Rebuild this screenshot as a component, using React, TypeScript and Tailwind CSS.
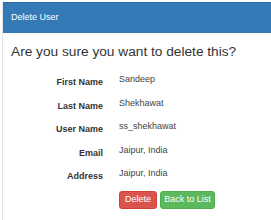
const rows = [
  ['First Name', 'Sandeep'],
  ['Last Name', 'Shekhawat'],
  ['User Name', 'ss_shekhawat'],
  ['Email', 'Jaipur, India'],
  ['Address', 'Jaipur, India'],
];

export default function App() {
  return (
    <div
      className="w-[271px] h-[220px] overflow-hidden bg-white pt-[2px] pl-[2px]"
      style={{ fontFamily: '"Liberation Sans", Arial, sans-serif' }}
    >
      <div className="h-full border-l border-[#e3e3e3]">
        <div className="h-[31px] bg-[#337ab7] border-t border-[#2e6da4] px-[8px] flex items-center text-white text-[9px]">
          Delete User
        </div>
        <div className="pl-[8px] pt-[9px]">
          <h3 className="text-[13.7px] leading-[20px] whitespace-nowrap text-[#333]">
            Are you sure you want to delete this?
          </h3>
          <div className="mt-[11px] flex flex-col">
            {rows.map(([label, value]) => (
              <div key={label} className="flex h-[23.5px]">
                <div className="w-[92px] text-right font-bold text-[9px] text-[#333] pt-[3px]">{label}</div>
                <div className="ml-[16px] text-[9px] text-[#444]">{value}</div>
              </div>
            ))}
          </div>
          <div className="ml-[108px] flex gap-[3px]">
            <button className="h-[18px] w-[38px] rounded-[3px] bg-[#d9534f] border border-[#d43f3a] text-white text-[9px]">
              Delete
            </button>
            <button className="h-[18px] w-[55px] rounded-[3px] bg-[#5cb85c] border border-[#4cae4c] text-white text-[9px]">
              Back to List
            </button>
          </div>
        </div>
      </div>
    </div>
  );
}
